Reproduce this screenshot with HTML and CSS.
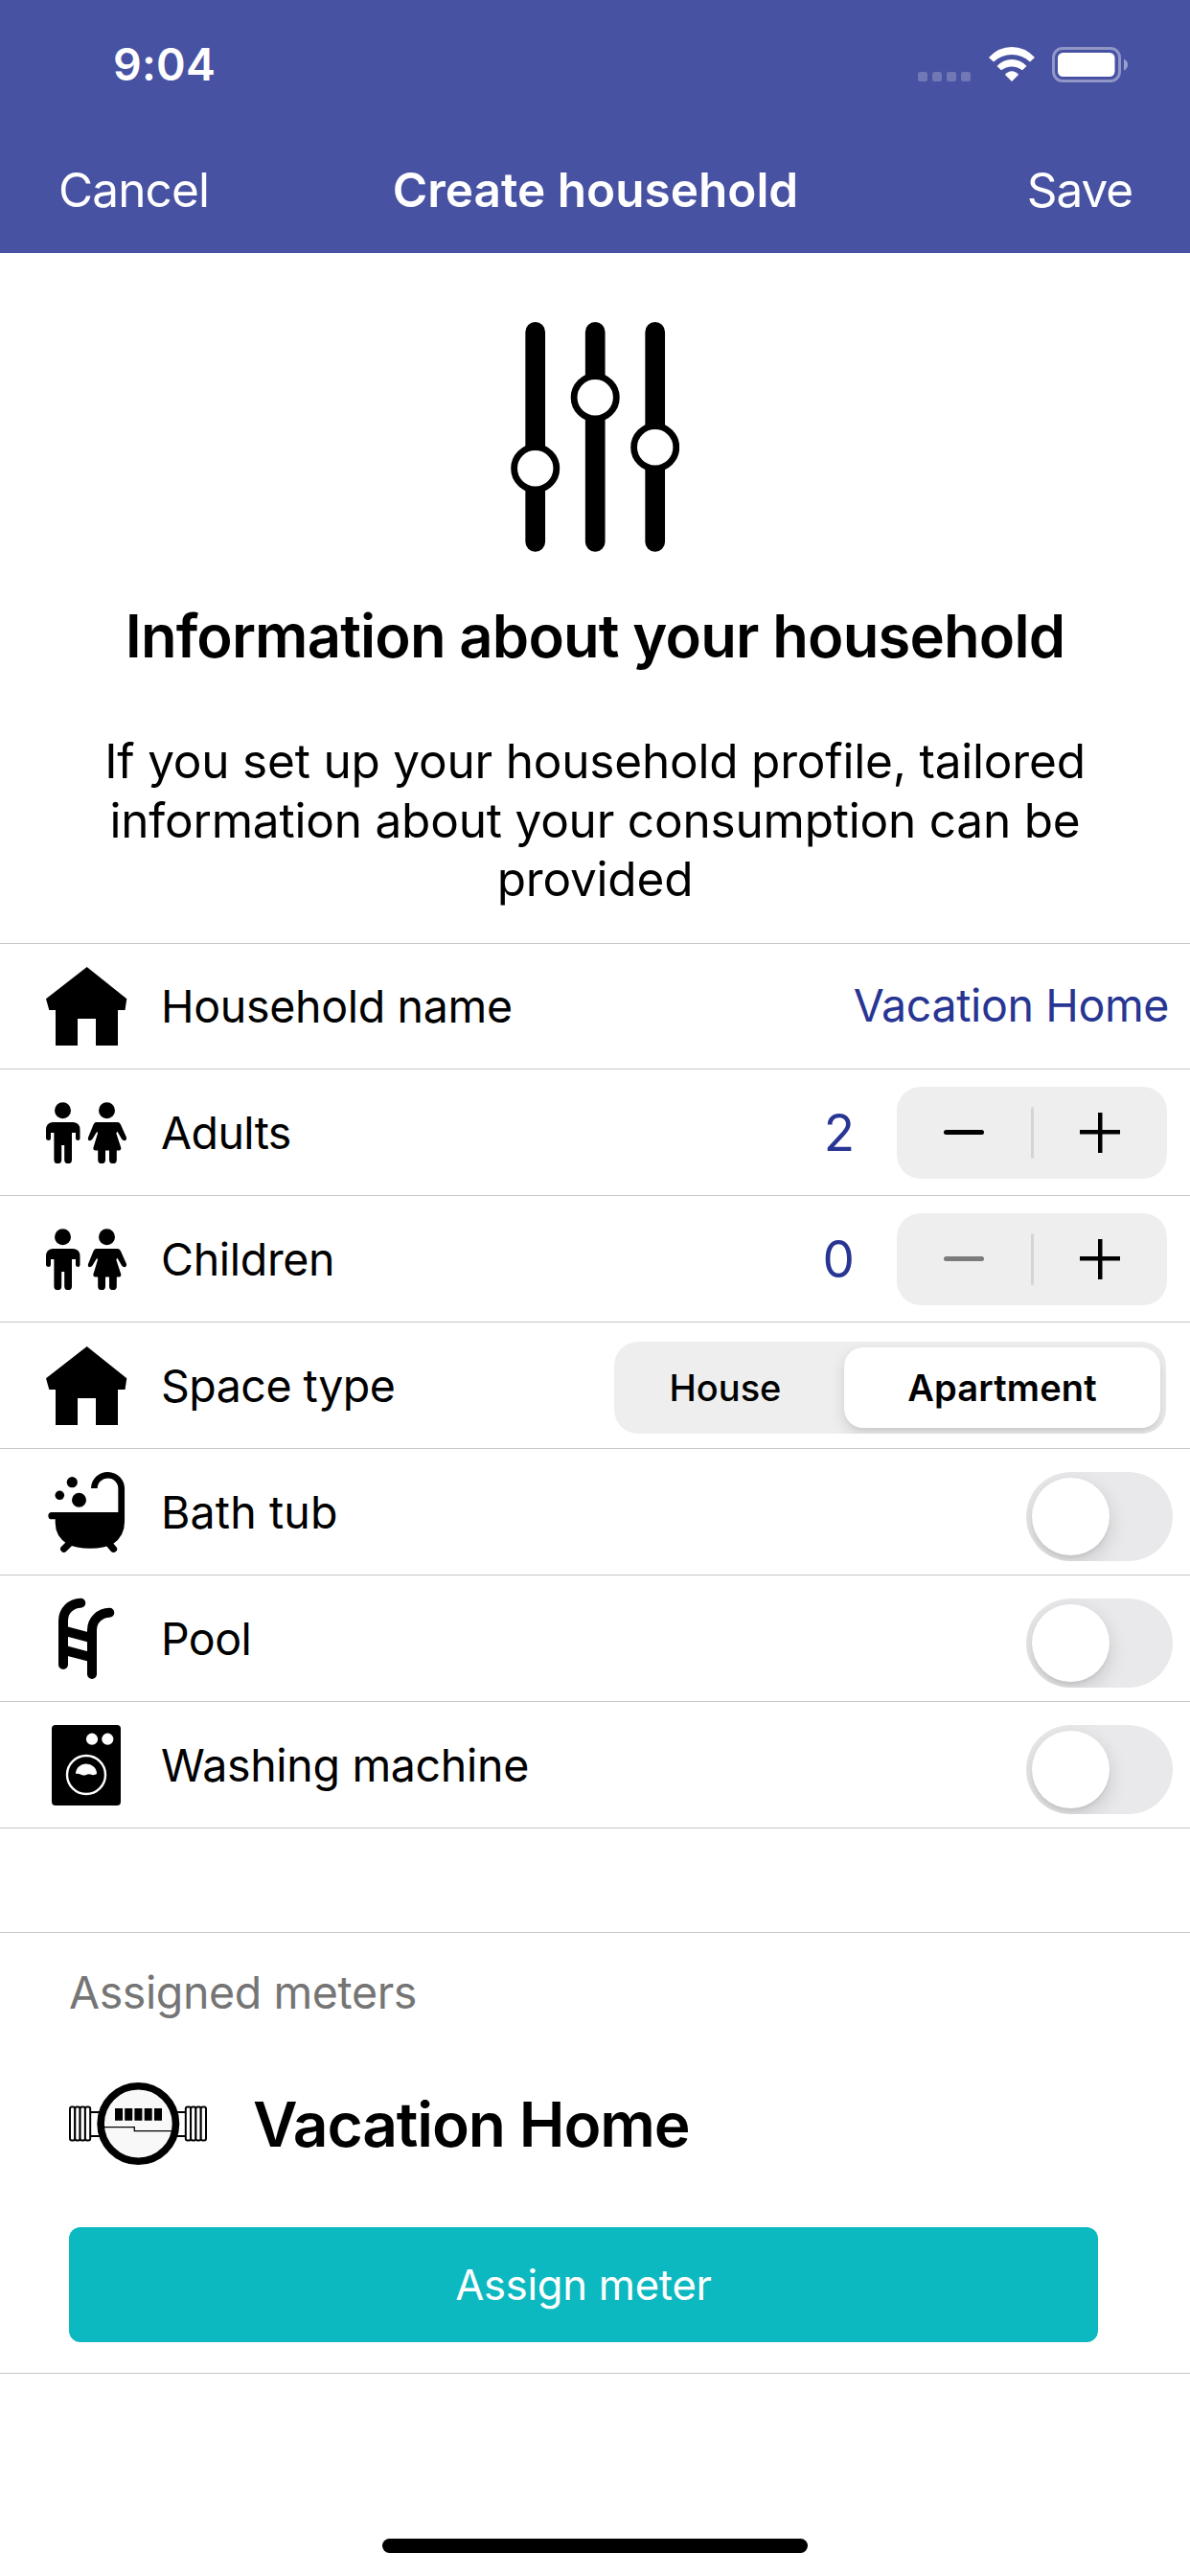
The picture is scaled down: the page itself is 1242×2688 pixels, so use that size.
FILE: index.html
```
<!DOCTYPE html>
<html lang="en">
<head>
<meta charset="utf-8">
<title>Create household</title>
<link rel="stylesheet" href="styles.css">
</head>
<body>
<svg class="sprite" aria-hidden="true">
  <symbol id="house" viewBox="0 0 85 130">
    <path d="M42.7 24L84.3 57.3L82.5 69H75V106H52V78H33V106H10V69H3.3L0 57.3Z"/>
  </symbol>
  <symbol id="people" viewBox="0 1 85 130">
    <circle cx="17.5" cy="42.7" r="8.5"/>
    <path d="M7 55H28.5Q35.5 55.5 35.5 63V72Q35.3 74 33.3 74T31 72V66H27V94.2A3.9 3.9 0 0 1 19.2 94.2V79H16.2V94.2A3.9 3.9 0 0 1 8.4 94.2V66H5V72Q4.8 74 2.6 74T0 72V63Q0 55.5 7 55Z"/>
    <circle cx="63.5" cy="42.7" r="8.5"/>
    <path d="M52 55H75Q77 55.2 78 57.5L84 71Q84.3 74 82 74.3Q80 74.3 79 72.5L74.5 64.7L73.3 66.5L78.4 82Q78.5 84 76.5 84.5H73.8V94.2A3.9 3.9 0 0 1 66 94.2V84.5H62V94.2A3.9 3.9 0 0 1 54.2 94.2V84.5H51.5Q49 84 49.3 82L54 66.5L53.2 64.7L48.5 72.5Q47.5 74.3 45.5 74.3Q43.3 74 44 71L49.5 57.5Q50.5 55.2 52 55Z"/>
  </symbol>
</svg>

<header class="header">
  <div class="status">
    <span class="status-time">9:04</span>
    <div class="status-icons">
      <svg width="55" height="38" viewBox="0 0 55 38" fill="#fff" fill-opacity=".22"><rect y="26" width="10" height="10" rx="2.5"/><rect x="15" y="26" width="10" height="10" rx="2.5"/><rect x="30" y="26" width="10" height="10" rx="2.5"/><rect x="45" y="26" width="10" height="10" rx="2.5"/></svg>
      <svg width="48" height="38" viewBox="0 0 48 38" fill="#fff"><path d="M24 0Q38 0 48 11L43 15.5Q35 8 24 8T5 15.5L0 11Q10 0 24 0Z"/><path d="M24 13Q33 13 39.5 20L35 24.3Q30 20.5 24 20.5T13 24.3L8.5 20Q15 13 24 13Z"/><path d="M24 25.3Q28 25.3 31 29L24 36L17 29Q20 25.3 24 25.3Z"/></svg>
      <svg width="79" height="38" viewBox="0 0 79 38" fill="#fff"><rect x="1.5" y="1.5" width="69" height="34" rx="9.5" fill="none" stroke="#fff" stroke-opacity=".4" stroke-width="3"/><rect x="6" y="6" width="59.5" height="25" rx="5.5"/><path d="M75 12.5Q79 14.5 79 18.5T75 24.5Z" fill-opacity=".45"/></svg>
    </div>
  </div>
  <nav class="nav">
    <span class="nav-cancel">Cancel</span>
    <h1 class="nav-title">Create household</h1>
    <span class="nav-save">Save</span>
  </nav>
</header>

<section class="hero">
  <svg width="176" height="240" viewBox="0 0 176 240">
    <g stroke="#000" stroke-width="20.7" stroke-linecap="round"><path d="M25.7 10.4V229.4M88.2 10.4V229.4M150.7 10.4V229.4"/></g>
    <g fill="#fff" stroke="#000" stroke-width="6.8"><circle cx="25.7" cy="152.7" r="22.1"/><circle cx="88.2" cy="78.7" r="22.1"/><circle cx="150.7" cy="130.7" r="22.1"/></g>
  </svg>
  <h2 class="hero-title">Information about your household</h2>
  <p class="hero-text">If you set up your household profile, tailored information about your consumption can be provided</p>
</section>

<ul class="list">
  <li class="row">
    <svg class="icon"><use href="#house"/></svg>
    <span class="label">Household name</span>
    <span class="text-value">Vacation Home</span>
  </li>
  <li class="row">
    <svg class="icon"><use href="#people"/></svg>
    <span class="label label-adults">Adults</span>
    <span class="count">2</span>
    <div class="stepper"><span class="minus"></span><span class="divider"></span><span class="plus"></span></div>
  </li>
  <li class="row">
    <svg class="icon"><use href="#people"/></svg>
    <span class="label">Children</span>
    <span class="count">0</span>
    <div class="stepper"><span class="minus disabled"></span><span class="divider"></span><span class="plus"></span></div>
  </li>
  <li class="row">
    <svg class="icon"><use href="#house"/></svg>
    <span class="label label-space">Space type</span>
    <div class="segments"><span class="segment">House</span><span class="segment selected">Apartment</span></div>
  </li>
  <li class="row">
    <svg class="icon" viewBox="0 1 85 130">
      <circle cx="27.3" cy="34.7" r="5.6"/><circle cx="14.3" cy="48.3" r="4.8"/><circle cx="34.5" cy="53.3" r="7.5"/>
      <path d="M50.3 41A14.2 14 0 0 1 78.7 41.5V76" fill="none" stroke="#000" stroke-width="6.7"/>
      <path d="M6 66H82V76Q82 91 70 99Q61 103.7 46 103.7T22 99Q9.7 91 9.7 77V73.3H6A3.65 3.65 0 0 1 6 66Z"/>
      <path d="M24.5 98.5L18.7 104.3M65.5 98.5L70.5 104.3" stroke="#000" stroke-width="7.2" stroke-linecap="round"/>
    </svg>
    <span class="label label-bath">Bath tub</span>
    <span class="toggle"></span>
  </li>
  <li class="row">
    <svg class="icon" viewBox="0 1 85 130">
      <g fill="none" stroke="#000" stroke-width="10"><path stroke-linecap="round" d="M18 93V47A18.3 18.3 0 0 1 36.3 28.7M48 103V57A18.3 18.3 0 0 1 66.3 38.7"/><path d="M18 57.4L48 65.3M18 77.6L48 85.5"/></g>
    </svg>
    <span class="label label-adults">Pool</span>
    <span class="toggle"></span>
  </li>
  <li class="row">
    <svg class="icon" viewBox="0 1 85 130">
      <rect x="6" y="24" width="72" height="84" rx="4"/>
      <g fill="#fff"><circle cx="48" cy="38.7" r="6.1"/><circle cx="64.3" cy="38.7" r="6.1"/><path d="M31 75A11 10.5 0 0 1 53 75Q50 77 46.5 75.5Q44 75 42 76Q38.5 77.2 36 75.6Q33.5 74.5 31 75Z"/></g>
      <circle cx="42" cy="76" r="20" fill="none" stroke="#fff" stroke-width="2.4"/>
    </svg>
    <span class="label">Washing machine</span>
    <span class="toggle"></span>
  </li>
</ul>

<section class="meters">
  <h3 class="meters-label">Assigned meters</h3>
  <div class="meter">
    <svg width="144" height="88" viewBox="0 0 144 88">
      <g fill="#fff" stroke="#000" stroke-width="2">
        <path d="M20 32H124M20 57H124"/>
        <rect x="1" y="26.5" width="5.3" height="35" rx="2"/><rect x="6.3" y="26.5" width="5.3" height="35" rx="2"/><rect x="11.6" y="26.5" width="5.3" height="35" rx="2"/><rect x="16.9" y="26.5" width="5.3" height="35" rx="2"/>
        <rect x="121.8" y="26.5" width="5.3" height="35" rx="2"/><rect x="127.1" y="26.5" width="5.3" height="35" rx="2"/><rect x="132.4" y="26.5" width="5.3" height="35" rx="2"/><rect x="137.7" y="26.5" width="5.3" height="35" rx="2"/>
      </g>
      <circle cx="72.3" cy="44" r="39.2" fill="#f8f8f8" stroke="#000" stroke-width="7.6"/>
      <path d="M36 47.7H68.3V51.7H108.5" fill="none" stroke="#000" stroke-width="1.3"/>
      <path d="M48 28h8v12.7h-8zM58.2 28h8v12.7h-8zM68.4 28h8v12.7h-8zM78.7 28h8v12.7h-8zM89 28h8v12.7h-8z"/>
    </svg>
    <span class="meter-name">Vacation Home</span>
  </div>
  <div class="button">Assign meter</div>
</section>

<footer class="footer"><div class="home-bar"></div></footer>
</body>
</html>
```
FILE: styles.css
```
* { box-sizing: border-box; }

body {
  margin: 0;
  width: 1242px;
  height: 2688px;
  display: flex;
  flex-direction: column;
  overflow: hidden;
  background: #fff;
  color: #000;
  font-family: Inter, "Liberation Sans", sans-serif;
  font-size: 46.5px;
}

h1, h2, h3, p, ul { margin: 0; padding: 0; }
svg { display: block; flex: none; }
.sprite { position: absolute; width: 0; height: 0; }

/* Header */
.header { height: 264px; flex: none; background: #4852a2; color: #fff; }
.status {
  height: 137px;
  padding: 0 65px 0 118px;
  display: flex;
  align-items: center;
  justify-content: space-between;
}
.status-time { font-weight: 600; letter-spacing: .005em; padding-bottom: 3px; }
.status-icons { display: flex; gap: 18.5px; padding-bottom: 1px; }
.nav {
  height: 121px;
  padding: 0 60px 0 61px;
  display: grid;
  grid-template-columns: 1fr auto 1fr;
  align-items: center;
  font-size: 49.5px;
}
.nav-cancel { letter-spacing: -.018em; }
.nav-title { font-size: 49.5px; font-weight: 600; }
.nav-save { text-align: right; letter-spacing: -.022em; }

/* Introduction */
.hero {
  height: 720px;
  flex: none;
  padding: 72px 70px 0;
  display: flex;
  flex-direction: column;
  align-items: center;
  text-align: center;
}
.hero-title {
  margin-top: 48px;
  font-size: 61.5px;
  line-height: 80px;
  font-weight: 600;
  letter-spacing: -.0135em;
  white-space: nowrap;
}
.hero-text {
  margin-top: 60px;
  font-size: 49.5px;
  line-height: 61.5px;
  letter-spacing: -.004em;
}

/* Form rows */
.list { list-style: none; border-top: 1px solid #c6c6c8; flex: none; }
.row {
  height: 132px;
  padding: 0 24px 0 48px;
  display: flex;
  align-items: center;
  border-bottom: 1px solid #c6c6c8;
}
.row:first-child { height: 131px; }
.icon { width: 85px; height: 130px; align-self: flex-end; }
.label { flex: 1; margin-left: 35px; letter-spacing: -.0068em; }
.label-adults { letter-spacing: -.0125em; }
.label-space { letter-spacing: -.011em; }
.label-bath { letter-spacing: .003em; }
.text-value { color: #283593; letter-spacing: -.0081em; margin-right: -2px; padding-bottom: 2px; }
.count { color: #283593; font-size: 53px; margin-right: 44px; }

.stepper {
  width: 282px;
  height: 96px;
  border-radius: 25px;
  background: #eee;
  display: grid;
  grid-template-columns: 1fr 3px 1fr;
  align-items: center;
  justify-items: center;
}
.divider { width: 3px; height: 54px; border-radius: 2px; background: #d5d5d6; }
.minus { width: 42px; height: 5px; border-radius: 3px; background: #000; margin-left: 1px; }
.disabled { background: #7b7b7b; }
.plus {
  width: 42px;
  height: 42px;
  background:
    linear-gradient(#000, #000) center / 42px 4.5px no-repeat,
    linear-gradient(#000, #000) center / 4.5px 42px no-repeat;
}

.segments {
  width: 576px;
  height: 96px;
  margin: 5px 1px 0 0;
  padding: 6px;
  border-radius: 25px;
  background: #eee;
  overflow: hidden;
  display: flex;
  justify-content: space-between;
  font-size: 38px;
}
.segment {
  width: 220px;
  display: flex;
  align-items: center;
  justify-content: center;
  font-weight: 500;
}
.selected {
  width: 330px;
  border-radius: 20px;
  background: #fff;
  font-weight: 600;
  letter-spacing: .004em;
  box-shadow: 0 6px 16px rgba(0, 0, 0, .13), 0 3px 3px rgba(0, 0, 0, .04);
}

.toggle {
  width: 153px;
  height: 93px;
  margin: 10px -6px 0 0;
  padding: 6px;
  border-radius: 47px;
  background: #e9e9eb;
  overflow: hidden;
}
.toggle::before {
  content: "";
  display: block;
  width: 81px;
  height: 81px;
  border-radius: 50%;
  background: #fff;
  box-shadow: 0 7px 20px rgba(0, 0, 0, .15), 0 3px 3px rgba(0, 0, 0, .05);
}

/* Assigned meters */
.meters {
  margin-top: 108px;
  padding: 32px 96px 32px 72px;
  border-top: 1px solid #c6c6c8;
  border-bottom: 1px solid #c6c6c8;
  flex: none;
}
.meters-label {
  font-size: 46.5px;
  line-height: 60px;
  font-weight: 400;
  letter-spacing: -.0085em;
  color: #757575;
}
.meter { height: 88px; margin: 63px 0 64px; display: flex; align-items: center; gap: 48px; }
.meter-name { font-size: 64px; font-weight: 600; letter-spacing: -.0175em; }
.button {
  height: 120px;
  border-radius: 12px;
  background: #0cb9c1;
  color: #fff;
  display: flex;
  align-items: center;
  justify-content: center;
  font-size: 43.5px;
  letter-spacing: -.005em;
}

.footer { flex: 1; display: flex; align-items: flex-end; justify-content: center; padding-bottom: 24px; }
.home-bar { width: 444px; height: 15px; border-radius: 8px; background: #000; }
```
